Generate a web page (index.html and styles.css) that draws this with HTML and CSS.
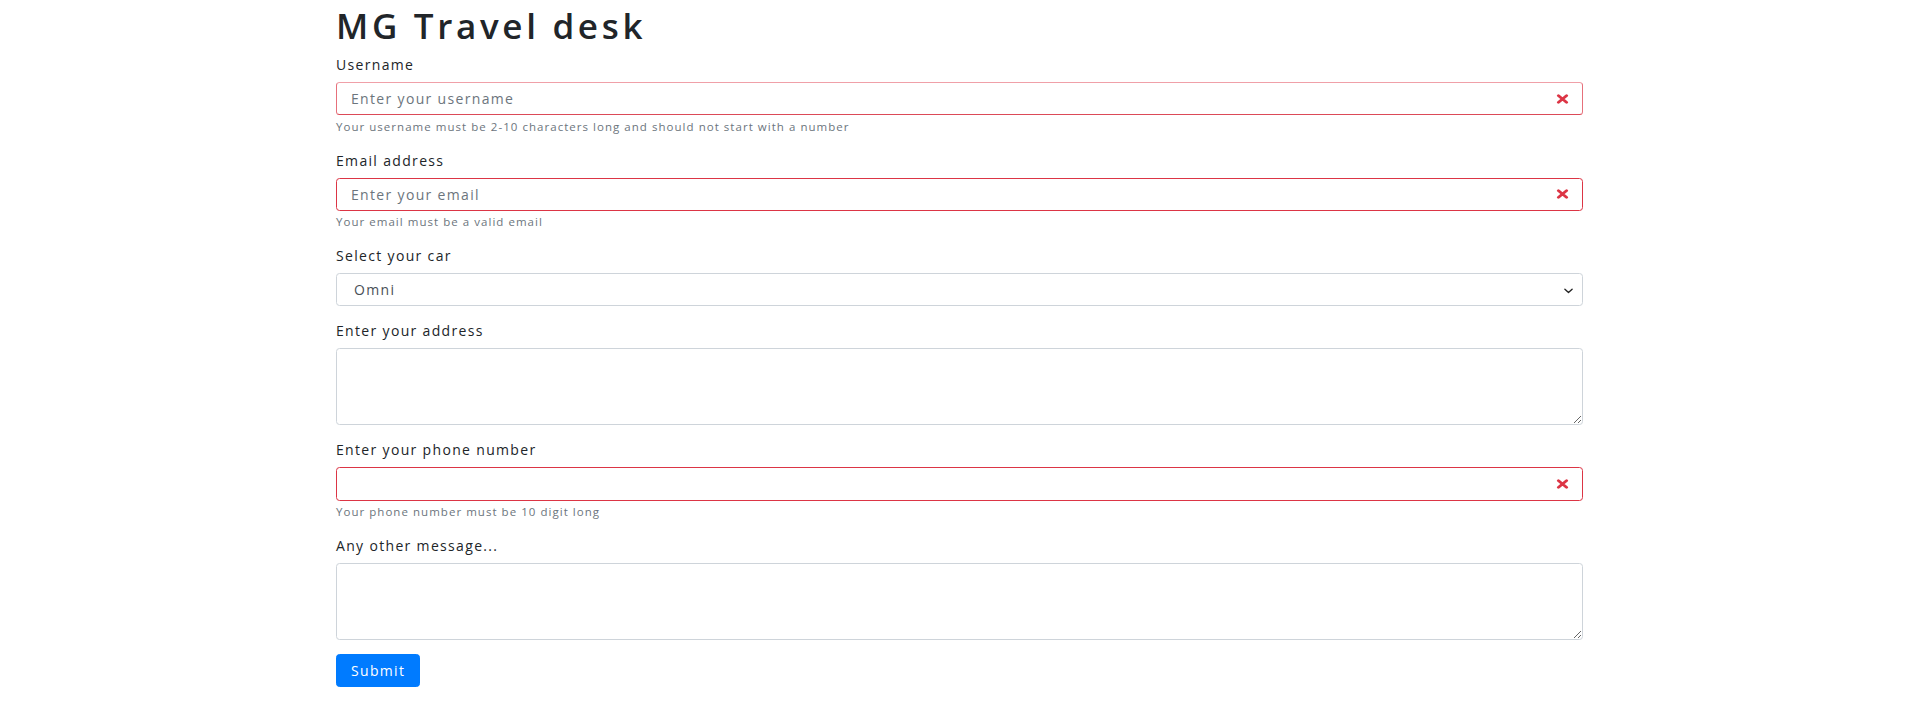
FILE: index.html
```html
<!DOCTYPE html>
<html lang="en">
<head>
<meta charset="utf-8">
<title>MG Travel desk</title>
<link rel="stylesheet" href="styles.css">
</head>
<body>
<div class="container">
  <h1 class="title">MG Travel desk</h1>
  <form class="form">
    <div class="form-group">
      <label class="label" for="username">Username</label>
      <div class="field">
        <input class="control invalid invalid-soft" id="username" type="text" placeholder="Enter your username">
        <svg class="x-icon" viewBox="-2 -2 7 7" preserveAspectRatio="none" aria-hidden="true"><path stroke="#dc3545" stroke-width="1.15" stroke-linecap="round" d="M0 0l3 3m0-3L0 3"/></svg>
      </div>
      <small class="help">Your username must be 2-10 characters long and should not start with a number</small>
    </div>
    <div class="form-group">
      <label class="label" for="email">Email address</label>
      <div class="field">
        <input class="control invalid" id="email" type="email" placeholder="Enter your email">
        <svg class="x-icon" viewBox="-2 -2 7 7" preserveAspectRatio="none" aria-hidden="true"><path stroke="#dc3545" stroke-width="1.15" stroke-linecap="round" d="M0 0l3 3m0-3L0 3"/></svg>
      </div>
      <small class="help">Your email must be a valid email</small>
    </div>
    <div class="form-group">
      <label class="label" for="car">Select your car</label>
      <div class="field">
        <select class="control select" id="car">
          <option>Omni</option>
          <option>Swift</option>
          <option>Innova</option>
        </select>
        <svg class="chevron" viewBox="0 0 10 6" aria-hidden="true"><path d="M1 1l4 3.6L9 1" fill="none" stroke="#222" stroke-width="1.5" stroke-linecap="round" stroke-linejoin="round"/></svg>
      </div>
    </div>
    <div class="form-group">
      <label class="label" for="address">Enter your address</label>
      <textarea class="control area" id="address" rows="3"></textarea>
    </div>
    <div class="form-group">
      <label class="label" for="phone">Enter your phone number</label>
      <div class="field">
        <input class="control invalid" id="phone" type="text">
        <svg class="x-icon" viewBox="-2 -2 7 7" preserveAspectRatio="none" aria-hidden="true"><path stroke="#dc3545" stroke-width="1.15" stroke-linecap="round" d="M0 0l3 3m0-3L0 3"/></svg>
      </div>
      <small class="help">Your phone number must be 10 digit long</small>
    </div>
    <div class="form-group">
      <label class="label" for="message">Any other message...</label>
      <textarea class="control area" id="message" rows="3"></textarea>
    </div>
    <button type="button" class="btn">Submit</button>
  </form>
</div>
</body>
</html>
```

FILE: styles.css
```css
* { box-sizing: border-box; }
html, body {
  margin: 0;
  background: #fff;
}
body {
  font-family: "Open Sans", "Noto Sans", "Liberation Sans", sans-serif;
  font-size: 14px;
  line-height: 1.5;
  letter-spacing: 0.095em;
  color: #212529;
}
.container {
  width: 1247px;
  margin: 0 auto;
  padding-top: 5px;
}
.title {
  font-size: 35px;
  font-weight: 600;
  line-height: 42px;
  margin: 0 0 7px;
  color: #212529;
  letter-spacing: 0.105em;
}
.form-group {
  margin-bottom: 14px;
}
.label {
  display: inline-block;
  margin-bottom: 7px;
}
.field {
  position: relative;
}
.control {
  display: block;
  width: 100%;
  height: 33.25px;
  padding: 5.25px 14px;
  font: inherit;
  font-size: 14px;
  line-height: 1.5;
  letter-spacing: 0.095em;
  color: #495057;
  background: #fff;
  border: 1px solid #ced4da;
  border-radius: 3.5px;
  outline: none;
}
.control::placeholder {
  color: #6c757d;
  opacity: 1;
}
.invalid {
  border-color: #dc3545;
  padding-right: 40px;
}
.invalid-soft {
  border-color: #f0a0a8 #e6707b #dc4a58 #e6707b;
}
.x-icon {
  position: absolute;
  right: 11px;
  top: 50%;
  width: 19px;
  height: 16px;
  margin-top: -8px;
}
.select {
  appearance: none;
  -webkit-appearance: none;
  padding-left: 17px;
}
.chevron {
  position: absolute;
  right: 10px;
  top: 50%;
  width: 9px;
  height: 6px;
  margin-top: -2px;
  pointer-events: none;
}
.area {
  height: 77px;
  resize: vertical;
}
.help {
  display: block;
  margin-top: 3.5px;
  font-size: 11.5px;
  line-height: 16.8px;
  letter-spacing: 0.09em;
  color: #6c757d;
}
.btn {
  display: inline-block;
  height: 33.25px;
  padding: 5.25px 14px;
  font: inherit;
  font-size: 14px;
  line-height: 1.5;
  letter-spacing: 0.095em;
  color: #fff;
  background: #007bff;
  border: 1px solid #007bff;
  border-radius: 3.5px;
  cursor: pointer;
}
```
